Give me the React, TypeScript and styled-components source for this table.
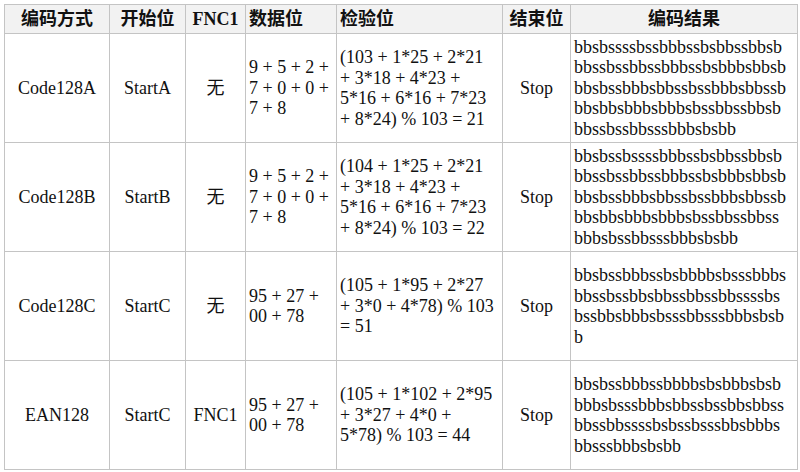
import styled, { createGlobalStyle } from 'styled-components'

const GlobalStyle = createGlobalStyle`
  html, body { margin: 0; padding: 0; background: #fff; }
  body { font-family: "Liberation Serif", "Noto Sans CJK SC", serif; }
`

const Page = styled.div`
  padding: 4px 3px 0 4px;
`

const Table = styled.table`
  width: 793px;
  table-layout: fixed;
  border-collapse: collapse;
  font-family: "Liberation Serif", "Noto Sans CJK SC", serif;
  font-size: 18px;
  line-height: 20.5px;
  color: #111;
`

const HeadCell = styled.th<{ $align?: 'left' | 'center' }>`
  background: #f2f2f2;
  border: 1px solid #c4c4c4;
  height: 28px;
  padding: 0 3px;
  font-weight: 700;
  text-align: ${({ $align }) => $align ?? 'center'};
  vertical-align: middle;
  white-space: nowrap;
`

const Row = styled.tr`
  height: 109px;
`

const Cell = styled.td<{ $align?: 'left' | 'center' }>`
  border: 1px solid #c4c4c4;
  padding: 0 3px;
  text-align: ${({ $align }) => $align ?? 'center'};
  vertical-align: middle;
`

const Line = styled.div`
  white-space: nowrap;
`

/* ── 데이터 ── */
const columns = [
  { title: '编码方式', width: 105, align: 'center' },
  { title: '开始位', width: 76, align: 'center' },
  { title: 'FNC1', width: 60, align: 'center' },
  { title: '数据位', width: 91, align: 'left' },
  { title: '检验位', width: 166, align: 'left' },
  { title: '结束位', width: 68, align: 'center' },
  { title: '编码结果', width: 227, align: 'center' },
] as const

type Entry = {
  mode: string
  start: string
  fnc1: string
  data: string[]
  check: string[]
  stop: string
  result: string[]
}

const rows: Entry[] = [
  {
    mode: 'Code128A',
    start: 'StartA',
    fnc1: '无',
    data: ['9 + 5 + 2 +', '7 + 0 + 0 +', '7 + 8'],
    check: ['(103 + 1*25 + 2*21', '+ 3*18 + 4*23 +', '5*16 + 6*16 + 7*23', '+ 8*24) % 103 = 21'],
    stop: 'Stop',
    result: [
      'bbsbssssbssbbbssbsbbssbbsb',
      'bbssbssbbssbbbssbsbbbsbbsb',
      'bbsbssbbbsbbssbssbbbsbbssb',
      'bbsbbsbbbsbbbsbssbbssbbsb',
      'bbssbssbbsssbbbsbsbb',
    ],
  },
  {
    mode: 'Code128B',
    start: 'StartB',
    fnc1: '无',
    data: ['9 + 5 + 2 +', '7 + 0 + 0 +', '7 + 8'],
    check: ['(104 + 1*25 + 2*21', '+ 3*18 + 4*23 +', '5*16 + 6*16 + 7*23', '+ 8*24) % 103 = 22'],
    stop: 'Stop',
    result: [
      'bbsbssbssssbbbssbsbbssbbsb',
      'bbssbssbbssbbbssbsbbbsbbsb',
      'bbsbssbbbsbbssbssbbbsbbssb',
      'bbsbbsbbbsbbbsbssbbssbbss',
      'bbbsbssbbsssbbbsbsbb',
    ],
  },
  {
    mode: 'Code128C',
    start: 'StartC',
    fnc1: '无',
    data: ['95 + 27 +', '00 + 78'],
    check: ['(105 + 1*95 + 2*27', '+ 3*0 + 4*78) % 103', '= 51'],
    stop: 'Stop',
    result: [
      'bbsbssbbbssbsbbbbsbsssbbbs',
      'bbssbssbbsbbssbbssbbssssbs',
      'bssbbsbbbsbsssbbsssbbbsbsb',
      'b',
    ],
  },
  {
    mode: 'EAN128',
    start: 'StartC',
    fnc1: 'FNC1',
    data: ['95 + 27 +', '00 + 78'],
    check: ['(105 + 1*102 + 2*95', '+ 3*27 + 4*0 +', '5*78) % 103 = 44'],
    stop: 'Stop',
    result: [
      'bbsbssbbbssbbbbsbsbbbsbsb',
      'bbbsbsssbbbsbbssbssbbsbbss',
      'bbssbbssssbsbssbsssbbsbbbs',
      'bbsssbbbsbsbb',
    ],
  },
]

const Lines = ({ items }: { items: string[] }) => (
  <>
    {items.map((t, i) => (
      <Line key={i}>{t}</Line>
    ))}
  </>
)

export default function App() {
  return (
    <>
      <GlobalStyle />
      <Page>
        <Table>
          <colgroup>
            {columns.map((c) => (
              <col key={c.title} style={{ width: c.width }} />
            ))}
          </colgroup>
          <thead>
            <tr>
              {columns.map((c) => (
                <HeadCell key={c.title} $align={c.align}>
                  {c.title}
                </HeadCell>
              ))}
            </tr>
          </thead>
          <tbody>
            {rows.map((r) => (
              <Row key={r.mode}>
                <Cell>{r.mode}</Cell>
                <Cell>{r.start}</Cell>
                <Cell>{r.fnc1}</Cell>
                <Cell $align="left">
                  <Lines items={r.data} />
                </Cell>
                <Cell $align="left">
                  <Lines items={r.check} />
                </Cell>
                <Cell>{r.stop}</Cell>
                <Cell $align="left">
                  <Lines items={r.result} />
                </Cell>
              </Row>
            ))}
          </tbody>
        </Table>
      </Page>
    </>
  )
}
